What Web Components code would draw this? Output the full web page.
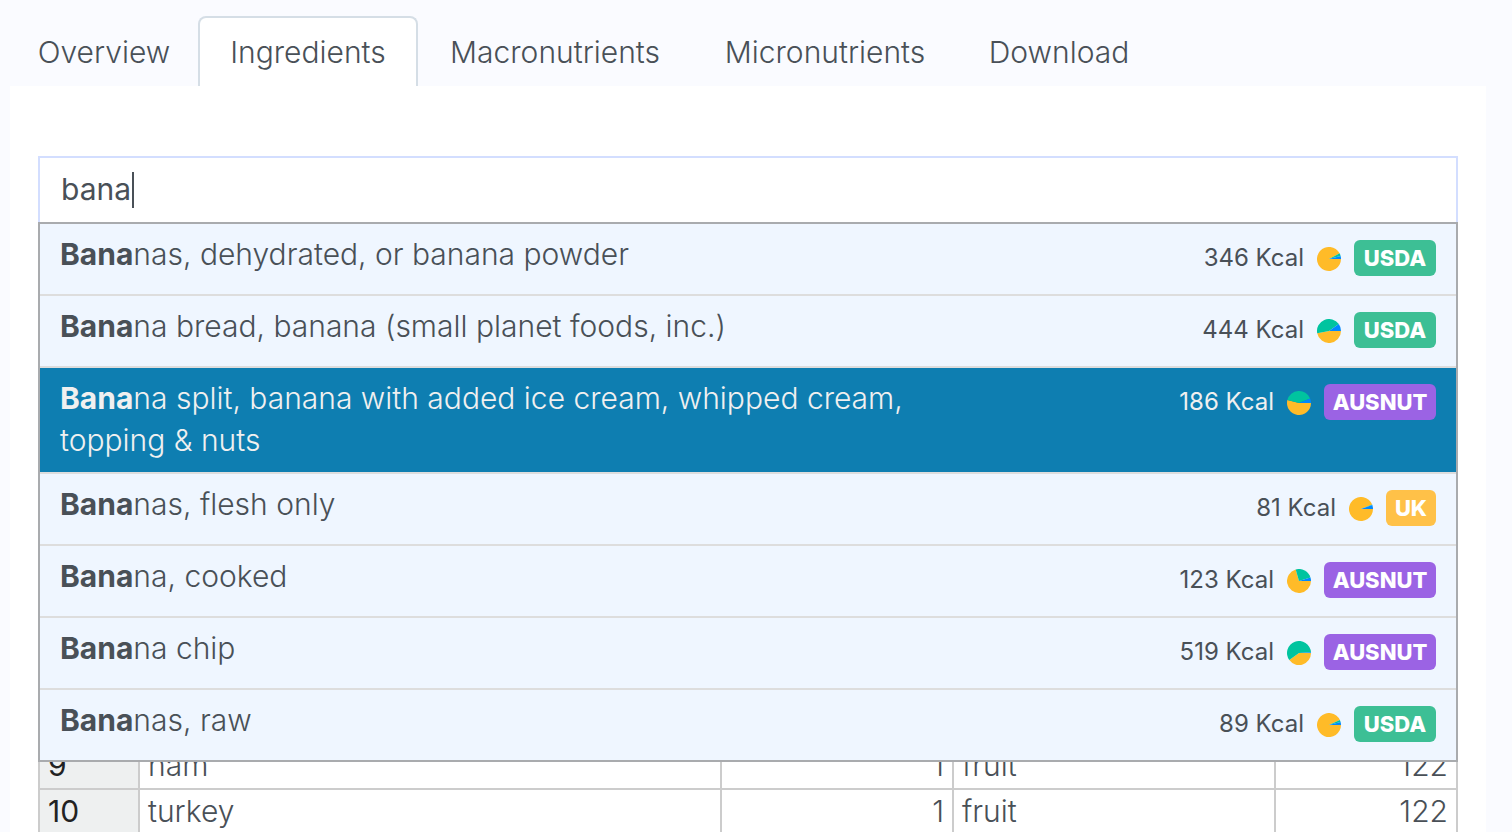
<!DOCTYPE html>
<html lang="en">
<head>
<meta charset="utf-8">
<meta name="viewport" content="width=device-width, initial-scale=1">
<title>Recipe ingredients</title>
<style>
html { overflow: hidden; }
body {
  margin: 0;
  background: #fafbff;
  color: #495057;
  font: 300 30px/42px Inter, "Open Sans", sans-serif;
}
</style>
</head>
<body>
<recipe-page></recipe-page>

<script>
class NavTab extends HTMLElement {
  connectedCallback() {
    const selected = this.hasAttribute('selected');
    this.attachShadow({ mode: 'open' }).innerHTML = `
      <style>
        :host { display: grid; }
        button {
          font: inherit; color: inherit; background: none; cursor: pointer;
          border: 2px solid transparent; border-bottom: 0;
          border-radius: 8px 8px 0 0; padding: 13px 0; white-space: nowrap;
        }
        button[aria-selected=true] { background: #fff; border-color: #d5dee6; }
      </style>
      <button type="button" role="tab" aria-selected="${selected}"><slot></slot></button>`;
  }
}
customElements.define('nav-tab', NavTab);

class NavTabs extends HTMLElement {
  connectedCallback() {
    this.attachShadow({ mode: 'open' }).innerHTML = `
      <style>
        :host {
          display: grid;
          grid-template-columns: 188px 220px 274px 266px 202px;
          padding: 16px 0 0 10px;
        }
      </style>
      <slot></slot>`;
  }
}
customElements.define('nav-tabs', NavTabs);

/* Energy split: carbohydrate, fat and protein, angles clockwise from three o'clock. */
class MacroPie extends HTMLElement {
  connectedCallback() {
    const fat = Number(this.getAttribute('fat'));
    const protein = Number(this.getAttribute('protein'));
    const point = a => {
      const r = a * Math.PI / 180;
      return `${(12 + 12 * Math.cos(r)).toFixed(2)} ${(12 + 12 * Math.sin(r)).toFixed(2)}`;
    };
    const slice = (from, to, fill) =>
      `<path fill="${fill}" d="M12 12L${point(from)}A12 12 0 ${to - from > 180 ? 1 : 0} 1 ${point(to)}Z"/>`;
    this.attachShadow({ mode: 'open' }).innerHTML = `
      <style>
        :host { display: block; padding-top: 2px; }
        svg { display: block; }
      </style>
      <svg width="24" height="24" viewBox="0 0 24 24" aria-hidden="true">
        ${slice(0, fat, '#ffbb28')}${slice(fat, protein, '#00c49f')}${slice(protein, 360, '#0088fe')}
      </svg>`;
  }
}
customElements.define('macro-pie', MacroPie);

class SourceBadge extends HTMLElement {
  connectedCallback() {
    this.attachShadow({ mode: 'open' }).innerHTML = `
      <style>
        :host {
          display: block; box-sizing: border-box; width: 82px;
          border-radius: 6px; background: #3dbf95; color: #fff;
          font-size: 22px; font-weight: 800; line-height: 36px; text-align: center;
        }
        :host([source=AUSNUT]) { width: 112px; background: #9b63e4; }
        :host([source=UK]) { width: 50px; background: #ffc148; }
      </style>
      ${this.getAttribute('source')}`;
  }
}
customElements.define('source-badge', SourceBadge);

class FoodOption extends HTMLElement {
  connectedCallback() {
    this.setAttribute('role', 'option');
    const get = n => this.getAttribute(n);
    this.attachShadow({ mode: 'open' }).innerHTML = `
      <style>
        :host {
          display: flex; justify-content: space-between; align-items: flex-start;
          box-sizing: border-box; min-height: 72px; padding: 9px 20px 11px;
          border-bottom: 2px solid #ddd; background: #eff6ff; cursor: pointer;
        }
        :host(:last-of-type) { border-bottom: 0; min-height: 70px; }
        :host([aria-selected=true]) { background: #0e7eb1; color: #f0f0f0; }
        .name { width: 64%; }
        .info { display: flex; align-items: center; gap: 13px; padding-top: 7px; }
        .energy { font-size: 24px; font-weight: 400; line-height: 36px; white-space: nowrap; }
      </style>
      <div class="name"><slot></slot></div>
      <div class="info">
        <span class="energy">${get('kcal')} Kcal</span>
        <macro-pie fat="${get('fat')}" protein="${get('protein')}"></macro-pie>
        <source-badge source="${get('source')}"></source-badge>
      </div>`;
  }
}
customElements.define('food-option', FoodOption);

class FoodSearch extends HTMLElement {
  connectedCallback() {
    this.attachShadow({ mode: 'open' }).innerHTML = `
      <style>
        :host { display: block; position: relative; }
        input {
          display: block; box-sizing: border-box; width: 100%; height: 68px;
          margin: 0; padding: 0 21px 2px; border: 2px solid #d3deff; border-radius: 0;
          background: #fff; color: inherit; font: inherit; font-weight: 400;
          outline: 0; caret-color: transparent;
        }
        .caret { position: absolute; left: 94px; top: 16px; width: 2px; height: 36px; background: #495057; }
        .menu { position: absolute; z-index: 1; top: 66px; left: 0; right: 0; border: 2px solid #a9abae; }
      </style>
      <input type="text" value="bana" aria-label="Search ingredients" autocomplete="off">
      <span class="caret"></span>
      <div class="menu" role="listbox" aria-label="Matching foods"><slot></slot></div>`;
  }
}
customElements.define('food-search', FoodSearch);

class IngredientTable extends HTMLElement {
  connectedCallback() {
    const rows = [[9, 'ham', 1, 'fruit', 122], [10, 'turkey', 1, 'fruit', 122]];
    this.attachShadow({ mode: 'open' }).innerHTML = `
      <style>
        :host { display: block; }
        table { width: 100%; border-collapse: collapse; table-layout: fixed; }
        th, td { height: 42px; padding: 0 8px 2px; border: 2px solid #ccc; text-align: left; font-weight: 300; }
        th { background: #eef0f0; color: #222; font-weight: 400; }
        .num { text-align: right; }
        .row { width: 100px; } .amount { width: 232px; } .unit { width: 322px; } .grams { width: 182px; }
      </style>
      <table aria-label="Ingredients">
        <colgroup><col class="row"><col><col class="amount"><col class="unit"><col class="grams"></colgroup>
        <tbody>${rows.map(([n, food, amount, unit, grams]) => `
          <tr><th scope="row">${n}</th><td>${food}</td><td class="num">${amount}</td><td>${unit}</td><td class="num">${grams}</td></tr>`).join('')}
        </tbody>
      </table>`;
  }
}
customElements.define('ingredient-table', IngredientTable);

class RecipePage extends HTMLElement {
  connectedCallback() {
    this.attachShadow({ mode: 'open' }).innerHTML = `
      <style>
        :host { display: block; }
        main { margin: 0 26px 0 10px; padding: 70px 28px 0; background: #fff; }
        b { font-weight: 700; }
        ingredient-table { margin-top: 518px; }
      </style>
      <nav-tabs role="tablist">
        <nav-tab>Overview</nav-tab>
        <nav-tab selected>Ingredients</nav-tab>
        <nav-tab>Macronutrients</nav-tab>
        <nav-tab>Micronutrients</nav-tab>
        <nav-tab>Download</nav-tab>
      </nav-tabs>
      <main>
        <food-search>
          <food-option kcal="346" fat="332" protein="345" source="USDA"><b>Bana</b>nas, dehydrated, or banana powder</food-option>
          <food-option kcal="444" fat="169" protein="325" source="USDA"><b>Bana</b>na bread, banana (small planet foods, inc.)</food-option>
          <food-option kcal="186" fat="194" protein="338" source="AUSNUT" aria-selected="true"><b>Bana</b>na split, banana with added ice cream, whipped cream, topping &amp; nuts</food-option>
          <food-option kcal="81" fat="338" protein="341" source="UK"><b>Bana</b>nas, flesh only</food-option>
          <food-option kcal="123" fat="254" protein="343" source="AUSNUT"><b>Bana</b>na, cooked</food-option>
          <food-option kcal="519" fat="144" protein="356" source="AUSNUT"><b>Bana</b>na chip</food-option>
          <food-option kcal="89" fat="335" protein="345" source="USDA"><b>Bana</b>nas, raw</food-option>
        </food-search>
        <ingredient-table></ingredient-table>
      </main>`;
  }
}
customElements.define('recipe-page', RecipePage);
</script>
</body>
</html>
